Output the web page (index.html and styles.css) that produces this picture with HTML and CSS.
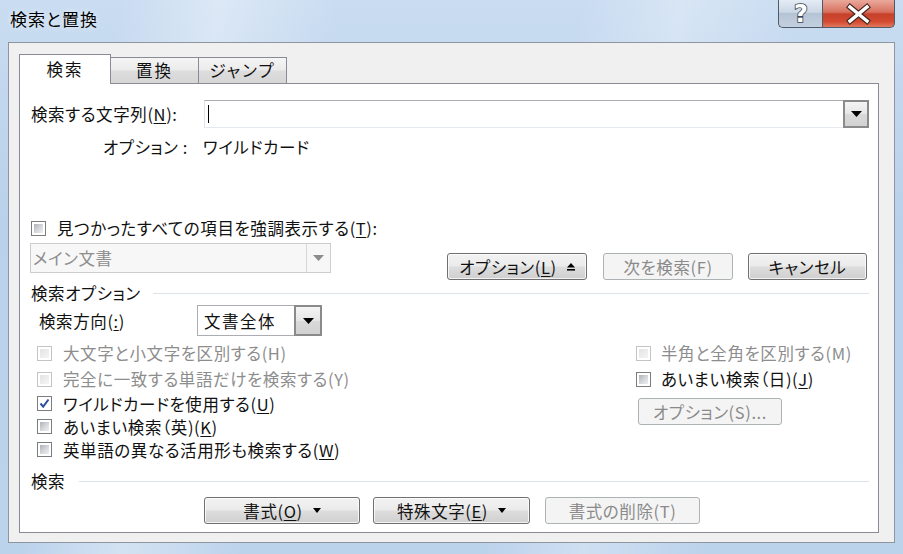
FILE: index.html
```html
<!DOCTYPE html>
<html lang="ja">
<head>
<meta charset="utf-8">
<title>検索と置換</title>
<link rel="stylesheet" href="styles.css">
</head>
<body>
<div class="window">
  <div class="titlebar">
    <div class="title">検索と置換</div>
    <div class="caption-buttons">
      <div class="cap-btn help"><span class="help-glyph">?</span></div>
      <div class="cap-btn close">
        <svg width="73" height="28" viewBox="0 0 73 28">
          <path d="M28 8 L45 22 M45 8 L28 22" class="x-outline"/>
          <path d="M28 8 L45 22 M45 8 L28 22" class="x-fill"/>
        </svg>
      </div>
    </div>
  </div>

  <div class="client">
    <div class="tabs">
      <div class="tab active">検索</div>
      <div class="tab">置換</div>
      <div class="tab">ジャンプ</div>
    </div>

    <div class="panel">
      <div class="find-row">
        <span class="find-label">検索する文字列(<u>N</u>):</span>
        <div class="combo find-combo">
          <div class="combo-input"><span class="caret"></span></div>
          <div class="combo-btn">
            <svg width="11" height="6" viewBox="0 0 11 6"><polygon points="0,0 11,0 5.5,6" fill="#000"/></svg>
          </div>
        </div>
      </div>

      <div class="options-row">
        <span class="opt-label">オプション :</span>
        <span class="opt-value">ワイルドカード</span>
      </div>

      <div class="highlight-row">
        <span class="cb"></span>
        <span>見つかったすべての項目を強調表示する(<u>T</u>):</span>
      </div>

      <div class="action-row">
        <div class="combo scope-combo">
          <div class="combo-input">メイン文書</div>
          <div class="combo-btn">
            <svg width="11" height="6" viewBox="0 0 11 6"><polygon points="0,0 11,0 5.5,6" fill="#8c8c8c"/></svg>
          </div>
        </div>
        <div class="btn-group">
          <button class="btn opt-btn"><span>オプション(<u>L</u>)</span>
            <svg width="8" height="8" viewBox="0 0 8 8"><polygon points="0,4.5 4,0 8,4.5" fill="#000"/><rect x="0" y="6" width="8" height="1.6" fill="#000"/></svg>
          </button>
          <button class="btn next-btn" disabled><span>次を検索(F)</span></button>
          <button class="btn cancel-btn"><span>キャンセル</span></button>
        </div>
      </div>

      <div class="section-head first">
        <span>検索オプション</span><span class="rule"></span>
      </div>

      <div class="dir-row">
        <span class="dir-label">検索方向(<u>:</u>)</span>
        <div class="combo dir-combo">
          <div class="combo-input">文書全体</div>
          <div class="combo-btn">
            <svg width="11" height="6" viewBox="0 0 11 6"><polygon points="0,0 11,0 5.5,6" fill="#000"/></svg>
          </div>
        </div>
      </div>

      <div class="opts">
        <div class="col-left">
          <div class="cbrow tall disabled"><span class="cb"></span><span>大文字と小文字を区別する(H)</span></div>
          <div class="cbrow tall disabled"><span class="cb"></span><span>完全に一致する単語だけを検索する(Y)</span></div>
          <div class="cbrow mid checked"><span class="cb"><svg width="13" height="13" viewBox="0 0 13 13"><path d="M2.5 6.5 L5.2 9.6 L10.5 2.5" fill="none" stroke="#2b4f9c" stroke-width="2"/></svg></span><span>ワイルドカードを使用する(<u>U</u>)</span></div>
          <div class="cbrow short"><span class="cb"></span><span>あいまい検索（英)(<u>K</u>)</span></div>
          <div class="cbrow short"><span class="cb"></span><span>英単語の異なる活用形も検索する(<u>W</u>)</span></div>
        </div>
        <div class="col-right">
          <div class="cbrow tall disabled"><span class="cb"></span><span>半角と全角を区別する(M)</span></div>
          <div class="cbrow tall"><span class="cb"></span><span>あいまい検索（日)(<u>J</u>)</span></div>
          <button class="btn jopt-btn" disabled><span>オプション(S)...</span></button>
        </div>
      </div>

      <div class="section-head second">
        <span>検索</span><span class="rule"></span>
      </div>

      <div class="bottom-btns">
        <button class="btn fmt-btn"><span>書式(<u>O</u>)</span>
          <svg width="8" height="5" viewBox="0 0 8 5"><polygon points="0,0 8,0 4,5" fill="#000"/></svg>
        </button>
        <button class="btn special-btn"><span>特殊文字(<u>E</u>)</span>
          <svg width="8" height="5" viewBox="0 0 8 5"><polygon points="0,0 8,0 4,5" fill="#000"/></svg>
        </button>
        <button class="btn clear-btn" disabled><span>書式の削除(T)</span></button>
      </div>
    </div>
  </div>
</div>
</body>
</html>
```

FILE: styles.css
```css
* { box-sizing: border-box; }

html, body {
  margin: 0;
  padding: 0;
}

body {
  width: 903px;
  height: 554px;
  overflow: hidden;
  font-family: "Noto Sans CJK JP", "Noto Sans", sans-serif;
  font-size: 16.5px;
  font-feature-settings: "palt";
  letter-spacing: 0.6px;
  line-height: 22px;
  color: #111;
}

u { text-underline-offset: 2px; }

.window {
  width: 903px;
  height: 554px;
  display: flex;
  flex-direction: column;
  padding: 0 8px 11px 8px;
  background:
    linear-gradient(100deg, rgba(255,255,255,0) 12%, rgba(255,255,255,.35) 22%, rgba(255,255,255,0) 34%,
      rgba(255,255,255,0) 58%, rgba(255,255,255,.28) 68%, rgba(255,255,255,0) 80%),
    linear-gradient(#c9dcf1, #b9d1ea 40%, #bcd3ec);
}

/* title bar */
.titlebar {
  height: 42px;
  display: flex;
  justify-content: space-between;
  align-items: flex-start;
  flex: none;
}

.title {
  margin: 7px 0 0 2px;
  font-size: 17px;
  line-height: 24px;
  letter-spacing: 1px;
  color: #000;
  text-shadow: 0 0 6px rgba(255,255,255,.9);
}

.caption-buttons {
  display: flex;
  height: 28px;
}

.cap-btn {
  height: 28px;
  border: 1px solid #4f5b69;
  border-top: none;
}

.cap-btn svg { display: block; margin-top: -1px; }

.help {
  width: 44px;
  border-radius: 0 0 0 5px;
  border-right: none;
  background: linear-gradient(#e4ecf5, #cbd7e4 45%, #b5c4d5 50%, #c3d0df);
  display: flex;
  align-items: center;
  justify-content: center;
}

.help-glyph {
  font-family: "DejaVu Sans", sans-serif;
  font-weight: bold;
  font-size: 24px;
  line-height: 26px;
  letter-spacing: 0;
  color: #fff;
  -webkit-text-stroke: 1.6px #3b4553;
  paint-order: stroke fill;
  margin-left: 1px;
}

.close {
  width: 73px;
  border-radius: 0 0 5px 0;
  background: linear-gradient(#e9a99c, #d8705e 45%, #c6402a 52%, #d44a31 80%, #e0785f);
}

.close svg { margin-left: -1px; }

.x-outline {
  stroke: #3f2520;
  stroke-width: 5.6;
  stroke-linecap: square;
  fill: none;
}

.x-fill {
  stroke: #fff;
  stroke-width: 3.4;
  stroke-linecap: square;
  fill: none;
}

/* client area */
.client {
  flex: 1;
  display: flex;
  flex-direction: column;
  background: #f0f0f0;
  border: 1px solid #8e959e;
  padding: 11px 15px 9px 10px;
}

.tabs {
  display: flex;
  height: 29px;
  align-items: flex-end;
  flex: none;
}

.tab {
  height: 26px;
  width: 89px;
  margin-left: -1px;
  border: 1px solid #898c95;
  border-bottom: none;
  background: linear-gradient(#f5f5f5, #ebebeb 48%, #dddddd 52%, #d6d6d6);
  text-align: center;
  line-height: 24px;
  letter-spacing: 2px;
  color: #111;
}

.tab.active {
  margin-left: 0;
  width: 92px;
  height: 30px;
  margin-bottom: -1px;
  background: #fff;
  position: relative;
  z-index: 1;
  line-height: 29px;
}

.panel {
  flex: 1;
  background: #fff;
  border: 1px solid #898c95;
  padding: 16px 9px 0 11px;
  display: flex;
  flex-direction: column;
}

/* rows */
.find-row {
  display: flex;
  align-items: center;
  height: 28px;
}

.find-label {
  width: 173px;
  flex: none;
}

.combo {
  display: flex;
  height: 100%;
}

.combo-input {
  flex: 1;
  background: #fff;
  border: 1px solid #abadb3;
  border-right: none;
  border-color: #abadb3 #dbdfe6 #e3e9ef #e2e3ea;
  display: flex;
  align-items: center;
  padding-left: 3px;
  white-space: nowrap;
}

.combo-btn {
  flex: none;
  width: 26px;
  display: flex;
  align-items: center;
  justify-content: center;
  border: 2px solid #8a8a8a;
  background: linear-gradient(#f4f4f4, #e6e6e6 50%, #d9d9d9 52%, #d2d2d2);
}

.find-combo {
  flex: 1;
}

.caret {
  width: 1px;
  height: 18px;
  background: #000;
}

.options-row {
  margin-top: 8px;
  height: 22px;
  display: flex;
  padding-left: 72px;
}

.opt-label {
  width: 100px;
  flex: none;
}

.highlight-row {
  margin-top: 59px;
  height: 22px;
  display: flex;
  align-items: center;
  gap: 11px;
}

/* checkboxes */
.cb {
  flex: none;
  width: 15px;
  height: 15px;
  border: 1px solid #7b7c7e;
  background: #fff;
  padding: 2px;
  position: relative;
}

.cb::before {
  content: "";
  display: block;
  width: 100%;
  height: 100%;
  background: linear-gradient(135deg, #aeb2b8, #d6d8dc 55%, #eeeff0);
}

.checked .cb::before { display: none; }

.checked .cb svg {
  position: absolute;
  left: 0;
  top: 0;
}

.disabled .cb {
  border-color: #c4c4c4;
}

.disabled .cb::before {
  background: linear-gradient(135deg, #e3e3e3, #f5f5f5);
}

.disabled { color: #8d8d8d; }

/* action row */
.action-row {
  margin-top: 4px;
  height: 37px;
  display: flex;
  justify-content: space-between;
}

.scope-combo {
  margin-left: -1px;
  width: 301px;
  height: 30px;
  color: #8d8d8d;
}

.scope-combo .combo-input {
  border: 1px solid #cdcdcd;
  border-right: none;
  background: #f7f7f7;
  padding-left: 2px;
}

.scope-combo .combo-btn {
  width: 25px;
  border: 1px solid #cdcdcd;
  border-left-color: #d8d8d8;
  background: #f7f7f7;
}

.btn-group {
  display: flex;
  align-items: flex-end;
  gap: 16px;
  padding-right: 2px;
}

.btn {
  font: inherit;
  letter-spacing: inherit;
  color: #111;
  height: 27px;
  padding: 0;
  border: 1px solid #707070;
  border-radius: 3px;
  background: linear-gradient(#f2f2f2, #ebebeb 48%, #dddddd 52%, #cfcfcf);
  box-shadow: inset 0 0 0 1px rgba(255,255,255,.75);
  display: flex;
  align-items: center;
  justify-content: center;
  gap: 10px;
  line-height: 22px;
}

.btn:disabled {
  color: #8a8a8a;
  border-color: #adb2b5;
  background: #f4f4f4;
  box-shadow: none;
}

.opt-btn { width: 140px; }
.next-btn { width: 130px; margin-right: -1px; }
.cancel-btn { width: 119px; }

/* sections */
.section-head {
  height: 22px;
  display: flex;
  align-items: center;
}

.section-head .rule {
  flex: 1;
  height: 1px;
  background: #dbe3ea;
}

.section-head.first {
  margin-top: 2px;
}

.section-head.first .rule { margin-left: 12px; }

.section-head.second {
  margin-top: 9px;
}

.section-head.second .rule { margin-left: 14px; }

.dir-row {
  margin-top: 1px;
  height: 31px;
  display: flex;
  align-items: center;
  padding-left: 8px;
}

.dir-label {
  width: 158px;
  flex: none;
}

.dir-combo {
  width: 125px;
}

.dir-combo .combo-input {
  padding-left: 6px;
  letter-spacing: 1.5px;
  border: 1px solid #abadb3;
  border-right: none;
}

.dir-combo .combo-btn {
  width: 28px;
}

/* option checkboxes */
.opts {
  margin-top: 4px;
  display: grid;
  grid-template-columns: 599px 1fr;
  padding-left: 6px;
}

.cbrow {
  display: flex;
  align-items: center;
  gap: 11px;
}

.cbrow.tall { height: 26px; }
.cbrow.mid { height: 23px; }
.cbrow.short { height: 23px; }

.col-right .cbrow { gap: 10px; }

.jopt-btn {
  margin-top: 6px;
  margin-left: 2px;
  width: 144px;
}

/* bottom buttons */
.bottom-btns {
  margin-top: 5px;
  display: flex;
  padding-left: 173px;
  gap: 13px;
}

.fmt-btn { width: 156px; }
.special-btn { width: 157px; margin-right: 2px; }
.clear-btn { width: 155px; }
```
